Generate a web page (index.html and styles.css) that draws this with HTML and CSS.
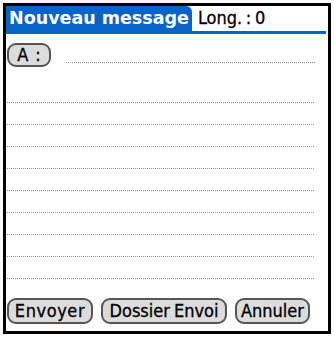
FILE: index.html
```html
<!DOCTYPE html>
<html>
<head>
<meta charset="utf-8">
<link rel="stylesheet" href="styles.css">
</head>
<body>
<div class="screen">
  <div class="titlebar">
    <div class="tab">Nouveau message</div>
    <div class="len">Long. : 0</div>
  </div>
  <div class="to-row">
    <div class="btn btn-a">A :</div>
    <div class="to-line"></div>
  </div>
  <div class="lines">
    <div class="line"></div>
    <div class="line"></div>
    <div class="line"></div>
    <div class="line"></div>
    <div class="line"></div>
    <div class="line"></div>
    <div class="line"></div>
    <div class="line"></div>
    <div class="line"></div>
  </div>
  <div class="buttons">
    <div class="btn b1">Envoyer</div>
    <div class="btn b2">Dossier Envoi</div>
    <div class="btn b3">Annuler</div>
  </div>
</div>
</body>
</html>
```
FILE: styles.css
```css
html, body {
  margin: 0;
  padding: 0;
  background: #fff;
}
body {
  padding: 3px;
  font-family: "DejaVu Sans Condensed", "DejaVu Sans", sans-serif;
}
.screen {
  width: 322px;
  height: 325px;
  border: 3px solid #000;
  background: #fff;
  display: flex;
  flex-direction: column;
  box-sizing: content-box;
}
.titlebar {
  display: flex;
  align-items: flex-end;
  height: 25px;
  border-bottom: 3px solid #0a64c8;
  margin-right: 2px;
}
.tab {
  background: #0a64c8;
  color: #fff;
  font-family: "DejaVu Sans", sans-serif;
  font-weight: bold;
  font-size: 17.5px;
  height: 25px;
  line-height: 24px;
  padding: 0 3px 0 3px;
  border-top-right-radius: 6px;
}
.len {
  color: #000;
  font-size: 18px;
  line-height: 24px;
  height: 25px;
  padding-left: 6px;
  word-spacing: -1.5px;
  -webkit-text-stroke: 0.3px #000;
}
.to-row {
  display: flex;
  align-items: flex-end;
  margin-top: 9px;
  padding-left: 1px;
}
.btn {
  border: 2px solid #555;
  border-radius: 9px;
  background: #dcdcdc;
  color: #000;
  font-size: 18px;
  text-align: center;
  box-sizing: border-box;
  -webkit-text-stroke: 0.3px #000;
}
.btn-a {
  width: 44px;
  height: 24px;
  line-height: 19px;
  word-spacing: 2px;
}
.to-line {
  width: 249px;
  margin-left: 15px;
  margin-bottom: 4px;
  border-bottom: 1px dotted #999;
}
.lines {
  margin-top: 14px;
  display: flex;
  flex-direction: column;
  padding-left: 1px;
}
.line {
  width: 307px;
  height: 22px;
  box-sizing: border-box;
  border-bottom: 1px dotted #999;
}
.buttons {
  display: flex;
  gap: 8px;
  margin-top: 19px;
  padding-left: 1px;
}
.b1 { width: 86px; height: 26px; line-height: 21px; letter-spacing: 0.6px; }
.b2 { width: 126px; height: 26px; line-height: 21px; word-spacing: -1px; }
.b3 { width: 75px; height: 26px; line-height: 21px; }
```
